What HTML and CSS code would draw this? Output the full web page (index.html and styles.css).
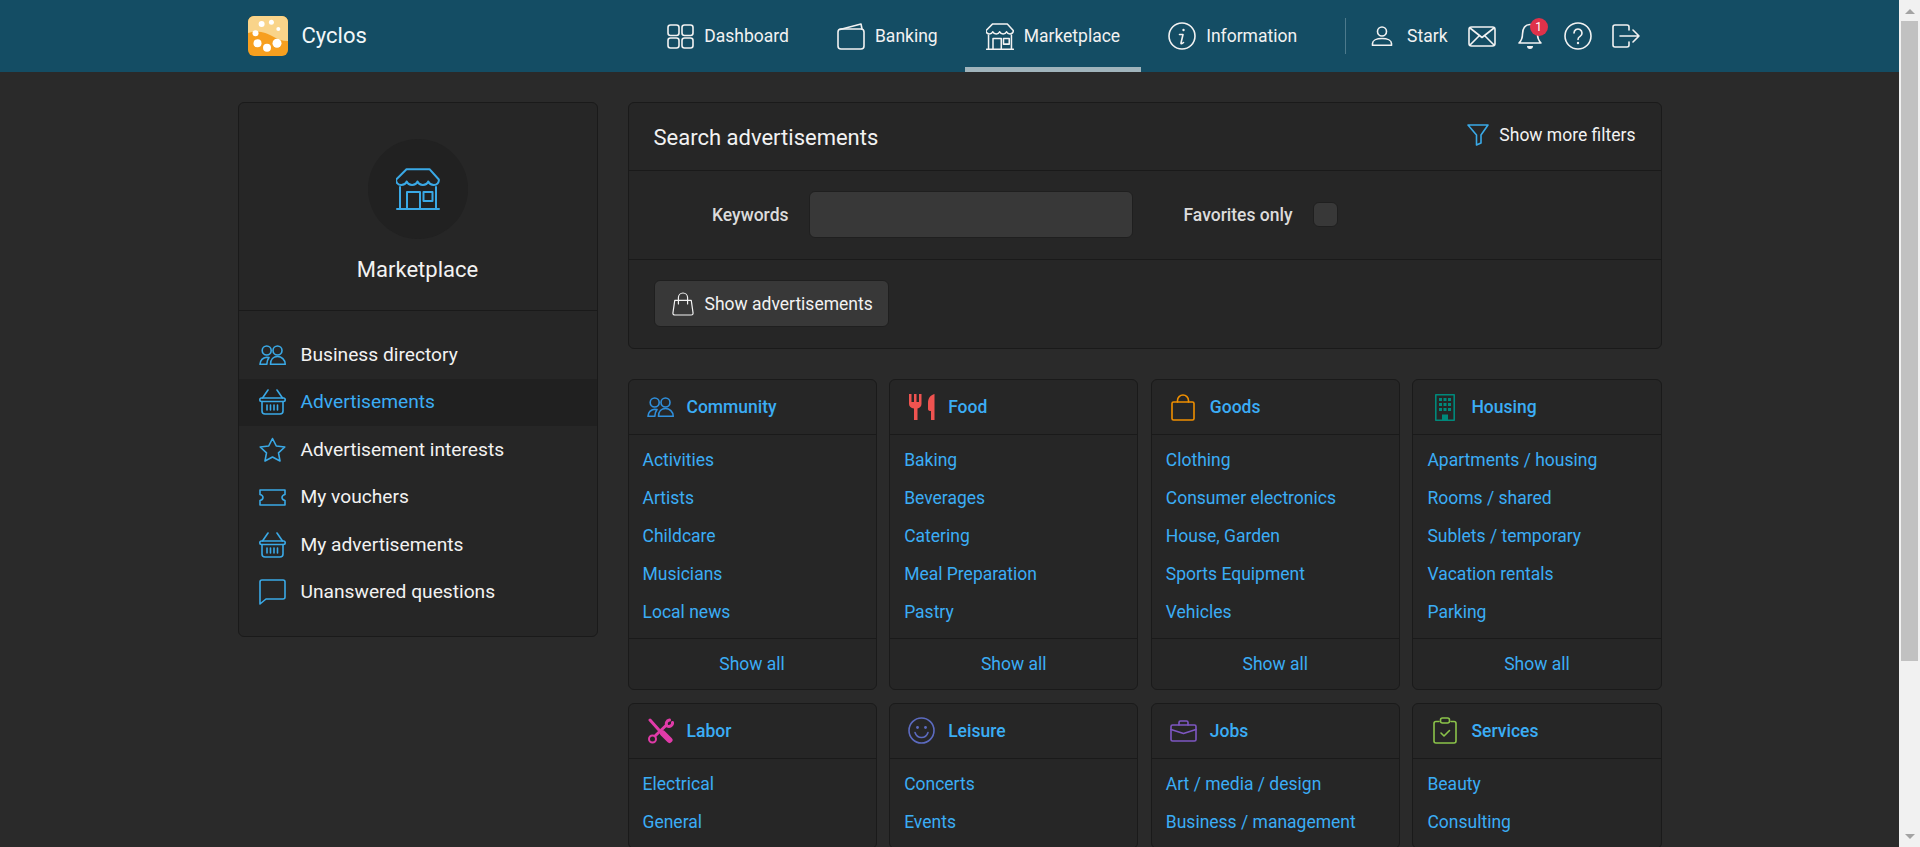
FILE: index.html
```html
<!DOCTYPE html>
<html lang="en">
<head>
  <meta charset="UTF-8" />
  <meta name="viewport" content="width=device-width, initial-scale=1.0"/>
  <title>Cyclos - Marketplace</title>
  <link rel="stylesheet" href="styles.css">
</head>
<body>
  <!-- icon set, used with <use> below -->
  <svg class="icon-defs" xmlns="http://www.w3.org/2000/svg">
    <symbol id="i-dashboard" viewBox="0 0 27 25"><rect x="1" y="1" width="11" height="10.5" rx="2.5"/><rect x="15" y="1" width="11" height="10.5" rx="2.5"/><rect x="1" y="14" width="11" height="10" rx="2.5"/><rect x="15" y="14" width="11" height="10" rx="2.5"/></symbol>
    <symbol id="i-wallet" viewBox="0 0 28 27"><rect x="1" y="6" width="26" height="20" rx="3"/><path d="M3 6.5 24 1l1 5"/></symbol>
    <symbol id="i-store" viewBox="0 0 44 42"><path d="M10.5 1.2h23l9.3 10.3c.4 3-1.7 5.4-5 5.4-2.6 0-4.6-1.3-5.5-3.4-.9 2.1-3 3.4-5.4 3.4s-4.500-1.300-5.400-3.400c-.9 2.100-3 3.400-5.400 3.400s-4.500-1.300-5.400-3.400c-.9 2.100-2.900 3.400-5.500 3.400-3.300 0-5.400-2.400-5-5.400z"/><path d="M4 19v22M40 19v22M1 41h42M11 41V24h13v17"/><rect x="27.500" y="24" width="9" height="9"/></symbol>
    <symbol id="i-info" viewBox="0 0 28 28"><circle cx="14" cy="14" r="13"/><path d="M11.500 12.500h3.500l-2 8.500c-.2 1 .8 1.200 2.500-.5"/><circle class="solid" cx="15.500" cy="8" r="1.200"/></symbol>
    <symbol id="i-user" viewBox="0 0 22 20"><circle cx="11" cy="5.500" r="4.500"/><path d="M1.500 19.300v-1.800c0-3 4-5 9.500-5s9.500 2 9.500 5v1.800z"/></symbol>
    <symbol id="i-mail" viewBox="0 0 28 21"><rect x="1" y="1" width="26" height="19" rx="2.500"/><path d="M2 2l12 9.500L26 2M2 19l9-9M26 19l-9-9"/></symbol>
    <symbol id="i-bell" viewBox="0 0 24 28"><path d="M12 2.500c-5 0-7.500 4-7.500 9.500 0 4.500-1.500 7-3.500 9h22c-2-2-3.500-4.500-3.500-9 0-5.500-2.500-9.500-7.500-9.500z"/><path class="solid" d="M9 24h6a3 3 0 0 1-6 0z"/></symbol>
    <symbol id="i-help" viewBox="0 0 28 28"><circle cx="14" cy="14" r="13"/><path d="M10 11a4 4 0 1 1 6.100 3.400c-1.500.9-2.100 1.600-2.100 3.100"/><circle class="solid" cx="14" cy="21" r="1.200"/></symbol>
    <symbol id="i-logout" viewBox="0 0 28 24"><path d="M17 6V3a2 2 0 0 0-2-2H3a2 2 0 0 0-2 2v18a2 2 0 0 0 2 2h12a2 2 0 0 0 2-2v-3M8 12h19M21 6l6 6-6 6"/></symbol>
    <symbol id="i-people" viewBox="0 0 27 20"><circle cx="7.700" cy="5.500" r="4.500"/><circle cx="18.500" cy="5.500" r="4.500"/><path d="M11.500 19.300c0-4.800 3-7.800 7-7.800s7.700 3 7.700 7.800zM1 19.300c.3-3.500 2.500-6.500 6.700-7 .8 0 1.600.1 2.300.3-1.300 1.700-2 4-2.200 6.700z"/></symbol>
    <symbol id="i-basket" viewBox="0 0 27 26"><path d="M9 1 3.500 9M18 1l5.500 8"/><rect x=".8" y="9" width="25.400" height="3.500" rx="1.700"/><path d="M3 12.500V22a3 3 0 0 0 3 3h15a3 3 0 0 0 3-3v-9.500M8 16v5M11.500 16v5M15 16v5M18.500 16v5"/></symbol>
    <symbol id="i-star" viewBox="0 0 27 25"><path d="M13.500 1.500 17.300 9l8.500 1-6.300 5.800L21 24l-7.500-4L6 24l1.500-8.200L1.200 10l8.500-1z"/></symbol>
    <symbol id="i-ticket" viewBox="0 0 27 17"><path d="M1 1h25v4.500c-2 .5-3 1.600-3 3s1 2.500 3 3V16H1v-4.500c2-.5 3-1.600 3-3s-1-2.500-3-3z"/></symbol>
    <symbol id="i-bubble" viewBox="0 0 27 26"><path d="M3 1h21a2 2 0 0 1 2 2v15a2 2 0 0 1-2 2H7l-6 5V3a2 2 0 0 1 2-2z"/></symbol>
    <symbol id="i-bag" viewBox="0 0 24 26"><path d="M3 9h18l2 14a2 2 0 0 1-2 2H3a2 2 0 0 1-2-2zM7 13V6a5 5 0 0 1 10 0v7"/></symbol>
    <symbol id="i-shopping" viewBox="0 0 24 27"><rect x="1" y="8" width="22" height="18" rx="1.500"/><path d="M6.500 8V6.500a5.500 5.500 0 0 1 11 0V8"/></symbol>
    <symbol id="i-filter" viewBox="0 0 22 22"><path d="M1 1h20l-7 10v8l-4.500 2V11z"/></symbol>
    <symbol id="i-food" viewBox="0 0 26 26"><path class="solid" d="M0 0h2.500v8H5V0h2.500v8H10V0h2.500v10c0 2.500-2 4-4 4.500V26H5V14.500C2 14 0 12.500 0 10zM25.500 0c-4 1-6.500 4-6.500 9v6c0 1.500 1 2 3 2v9h3.500z"/></symbol>
    <symbol id="i-building" viewBox="0 0 20 27"><rect x=".8" y=".8" width="18.400" height="25.400"/><path class="solid" d="M4 4h3v3H4zM8.500 4h3v3h-3zM13 4h3v3h-3zM4 9h3v3H4zM8.500 9h3v3h-3zM13 9h3v3h-3zM4 14h3v3H4zM8.500 14h3v3h-3zM13 14h3v3h-3zM7 20.500h6V26H7z"/></symbol>
    <symbol id="i-tools" viewBox="0 0 27 26"><path class="thick" d="M3 2l8.500 9.500"/><path class="handle" d="M16 15.500l6.500 6.500"/><path class="thick" d="M8.500 17.500 19 7.500"/><path class="thick" d="M25.500 4.500c.5 2.500-2.500 5-5.500 3.500-1.500-2.500-.5-5.500 2.500-6"/><circle class="ring" cx="5.500" cy="21" r="3.500"/></symbol>
    <symbol id="i-smile" viewBox="0 0 27 27"><circle cx="13.500" cy="13.500" r="12.500"/><circle class="solid" cx="9.500" cy="10.500" r="1.400"/><circle class="solid" cx="17.500" cy="10.500" r="1.400"/><path d="M7 15.500c1 3 3.500 5 6.500 5s5.500-2 6.500-5"/></symbol>
    <symbol id="i-briefcase" viewBox="0 0 27 22"><rect x="1" y="5" width="25" height="16" rx="1.500"/><path d="M9 5V2.500A1.500 1.500 0 0 1 10.500 1h6A1.500 1.500 0 0 1 18 2.500V5M1 9.500l12.500 4 12.500-4"/></symbol>
    <symbol id="i-clipboard" viewBox="0 0 24 27"><path d="M6 4.500H3a2 2 0 0 0-2 2V24a2 2 0 0 0 2 2h18a2 2 0 0 0 2-2V6.500a2 2 0 0 0-2-2h-3M8 16l3 3 5.500-5.500"/><rect x="7.500" y="1" width="9" height="5" rx="2"/></symbol>
  </svg>

  <div class="page">
    <header class="topbar">
      <div class="topbar-inner">
        <a class="brand" href="#">
          <svg class="logo" viewBox="0 0 40 40" width="40" height="40">
            <rect width="40" height="40" rx="6" fill="#f79f1f"/>
            <path d="M0 17V6a6 6 0 0 1 6-6h28a6 6 0 0 1 6 6v19c-6 0-11-2-16-5s-14-6-24-3z" fill="#f9d48a"/>
            <g fill="#fff">
              <circle cx="13.600" cy="8" r="3"/><circle cx="23.400" cy="6.300" r="2.500"/><circle cx="30.300" cy="13" r="2"/>
              <circle cx="7.500" cy="17.300" r="3"/><circle cx="9.500" cy="27.300" r="4"/><circle cx="19" cy="31.700" r="4"/><circle cx="29" cy="27.300" r="4.500"/>
            </g>
          </svg>
          <span>Cyclos</span>
        </a>

        <nav class="menu">
          <a href="#"><svg class="ic ic-dashboard"><use href="#i-dashboard"/></svg>Dashboard</a>
          <a href="#"><svg class="ic ic-wallet"><use href="#i-wallet"/></svg>Banking</a>
          <a href="#" class="active"><svg class="ic ic-store"><use href="#i-store"/></svg>Marketplace</a>
          <a href="#"><svg class="ic ic-round"><use href="#i-info"/></svg>Information</a>
        </nav>

        <div class="usermenu">
          <a class="username" href="#"><svg class="ic ic-user"><use href="#i-user"/></svg>Stark</a>
          <a href="#"><svg class="ic ic-mail"><use href="#i-mail"/></svg></a>
          <a class="bell" href="#"><svg class="ic ic-bell"><use href="#i-bell"/></svg><span class="badge">1</span></a>
          <a href="#"><svg class="ic ic-round"><use href="#i-help"/></svg></a>
          <a href="#"><svg class="ic ic-logout"><use href="#i-logout"/></svg></a>
        </div>
      </div>
    </header>

    <div class="container">
      <aside class="card sidebar">
        <div class="side-head">
          <div class="side-circle"><svg class="ic-big"><use href="#i-store"/></svg></div>
          <h2>Marketplace</h2>
        </div>
        <ul class="side-menu">
          <li><a href="#"><span class="side-ic"><svg class="s-people"><use href="#i-people"/></svg></span>Business directory</a></li>
          <li class="active"><a href="#"><span class="side-ic"><svg class="s-basket"><use href="#i-basket"/></svg></span>Advertisements</a></li>
          <li><a href="#"><span class="side-ic"><svg class="s-star"><use href="#i-star"/></svg></span>Advertisement interests</a></li>
          <li><a href="#"><span class="side-ic"><svg class="s-ticket"><use href="#i-ticket"/></svg></span>My vouchers</a></li>
          <li><a href="#"><span class="side-ic"><svg class="s-basket"><use href="#i-basket"/></svg></span>My advertisements</a></li>
          <li><a href="#"><span class="side-ic"><svg class="s-bubble"><use href="#i-bubble"/></svg></span>Unanswered questions</a></li>
        </ul>
      </aside>

      <main class="content">
        <section class="card search">
          <div class="search-head">
            <h1>Search advertisements</h1>
            <a class="filters" href="#"><svg><use href="#i-filter"/></svg>Show more filters</a>
          </div>
          <div class="search-fields">
            <label class="field-keywords" for="keywords">Keywords</label>
            <input type="text" id="keywords" />
            <label class="field-favorites" for="favorites">Favorites only</label>
            <span class="checkbox" id="favorites"></span>
          </div>
          <div class="search-actions">
            <button type="button"><svg><use href="#i-bag"/></svg>Show advertisements</button>
          </div>
        </section>

        <div class="categories">
          <section class="card cat">
            <h3><span class="cat-ic"><svg class="c-people"><use href="#i-people"/></svg></span>Community</h3>
            <ul><li><a href="#">Activities</a></li><li><a href="#">Artists</a></li><li><a href="#">Childcare</a></li><li><a href="#">Musicians</a></li><li><a href="#">Local news</a></li></ul>
            <a class="show-all" href="#">Show all</a>
          </section>
          <section class="card cat">
            <h3><span class="cat-ic"><svg class="c-food"><use href="#i-food"/></svg></span>Food</h3>
            <ul><li><a href="#">Baking</a></li><li><a href="#">Beverages</a></li><li><a href="#">Catering</a></li><li><a href="#">Meal Preparation</a></li><li><a href="#">Pastry</a></li></ul>
            <a class="show-all" href="#">Show all</a>
          </section>
          <section class="card cat">
            <h3><span class="cat-ic"><svg class="c-goods"><use href="#i-shopping"/></svg></span>Goods</h3>
            <ul><li><a href="#">Clothing</a></li><li><a href="#">Consumer electronics</a></li><li><a href="#">House, Garden</a></li><li><a href="#">Sports Equipment</a></li><li><a href="#">Vehicles</a></li></ul>
            <a class="show-all" href="#">Show all</a>
          </section>
          <section class="card cat">
            <h3><span class="cat-ic"><svg class="c-housing"><use href="#i-building"/></svg></span>Housing</h3>
            <ul><li><a href="#">Apartments / housing</a></li><li><a href="#">Rooms / shared</a></li><li><a href="#">Sublets / temporary</a></li><li><a href="#">Vacation rentals</a></li><li><a href="#">Parking</a></li></ul>
            <a class="show-all" href="#">Show all</a>
          </section>
          <section class="card cat">
            <h3><span class="cat-ic"><svg class="c-labor"><use href="#i-tools"/></svg></span>Labor</h3>
            <ul><li><a href="#">Electrical</a></li><li><a href="#">General</a></li></ul>
          </section>
          <section class="card cat">
            <h3><span class="cat-ic"><svg class="c-leisure"><use href="#i-smile"/></svg></span>Leisure</h3>
            <ul><li><a href="#">Concerts</a></li><li><a href="#">Events</a></li></ul>
          </section>
          <section class="card cat">
            <h3><span class="cat-ic"><svg class="c-jobs"><use href="#i-briefcase"/></svg></span>Jobs</h3>
            <ul><li><a href="#">Art / media / design</a></li><li><a href="#">Business / management</a></li></ul>
          </section>
          <section class="card cat">
            <h3><span class="cat-ic"><svg class="c-services"><use href="#i-clipboard"/></svg></span>Services</h3>
            <ul><li><a href="#">Beauty</a></li><li><a href="#">Consulting</a></li></ul>
          </section>
        </div>
      </main>
    </div>
  </div>

  <!-- browser scrollbar as it shows in the screenshot -->
  <div class="scrollbar">
    <span class="arrow-up"></span>
    <span class="thumb"></span>
    <span class="arrow-down"></span>
  </div>
</body>
</html>
```

FILE: styles.css
```css
html {
  overflow: hidden;
}

body {
  margin: 0;
  background: #2a2a2a;
  color: #f2f2f2;
  font-family: Roboto, "Liberation Sans", sans-serif;
  font-size: 17.5px;
  line-height: 24px;
}

a {
  color: inherit;
  text-decoration: none;
}

ul {
  list-style: none;
  margin: 0;
  padding: 0;
}

svg {
  display: block;
  fill: none;
  stroke: currentColor;
  stroke-width: 1.6;
  stroke-linejoin: round;
  stroke-linecap: round;
  overflow: visible;
}

.solid {
  fill: currentColor;
  stroke: none;
}

.thick {
  stroke-width: 3;
}

.handle {
  stroke-width: 6;
}

.ring {
  stroke-width: 2;
}

.icon-defs {
  display: none;
}

.page {
  margin-right: 21px;
}

/* scrollbar */
.scrollbar {
  position: fixed;
  top: 0;
  right: 0;
  bottom: 0;
  width: 21px;
  background: #f1f1f1;
  display: flex;
  flex-direction: column;
  align-items: center;
}

.arrow-up {
  margin: 9px 0 7px;
  border: 5px solid transparent;
  border-top: 0;
  border-bottom-color: #a3a3a3;
  border-left-width: 5px;
  border-right-width: 5px;
}

.thumb {
  width: 17px;
  height: 640px;
  background: #c1c1c1;
}

.arrow-down {
  margin-top: auto;
  margin-bottom: 8px;
  border: 5px solid transparent;
  border-bottom: 0;
  border-top-color: #a3a3a3;
}

/* top bar */
.topbar {
  background: #144d64;
  height: 72px;
}

.topbar-inner {
  width: 1424px;
  height: 72px;
  margin: 0 auto;
  padding: 0 22px 0 10px;
  box-sizing: border-box;
  display: flex;
  align-items: center;
}

.brand {
  display: flex;
  align-items: center;
  gap: 14px;
  font-size: 22px;
  color: #f2f7f9;
}

.logo {
  stroke: none;
}

.menu {
  display: flex;
  gap: 6px;
  height: 72px;
  margin-left: auto;
}

.menu a {
  position: relative;
  display: flex;
  align-items: center;
  gap: 10px;
  padding: 0 21px;
}

.menu a.active::after {
  content: "";
  position: absolute;
  left: 0;
  right: 0;
  bottom: 0;
  height: 5px;
  background: #a0b4bc;
}

.ic-dashboard { width: 27px; height: 25px; }
.ic-wallet { width: 28px; height: 27px; }
.ic-store { width: 28px; height: 27px; stroke-width: 2.4; }
.ic-round { width: 28px; height: 28px; }
.ic-user { width: 22px; height: 20px; }
.ic-mail { width: 28px; height: 21px; }
.ic-bell { width: 24px; height: 28px; }
.ic-logout { width: 28px; height: 24px; }

.usermenu {
  display: flex;
  align-items: center;
  gap: 20px;
  height: 36px;
  margin-left: 27px;
  padding-left: 25px;
  border-left: 1px solid #4d7a8c;
}

.usermenu a {
  display: flex;
  align-items: center;
}

.username {
  gap: 14px;
}

.bell {
  position: relative;
  width: 28px;
  justify-content: center;
}

.badge {
  position: absolute;
  top: -4px;
  left: 14px;
  width: 18px;
  height: 18px;
  border-radius: 50%;
  background: #e0324a;
  color: #fff;
  font-size: 12px;
  line-height: 18px;
  text-align: center;
}

/* page */
.container {
  width: 1424px;
  margin: 0 auto;
  padding: 30px 0 47px;
  display: grid;
  grid-template-columns: 360px 1fr;
  gap: 30px;
  align-items: start;
}

.card {
  background: #262626;
  border: 1px solid #1a1a1a;
  border-radius: 6px;
}

/* sidebar */
.side-head {
  display: flex;
  flex-direction: column;
  align-items: center;
  padding: 36px 0 26px;
  border-bottom: 1px solid #1a1a1a;
}

.side-circle {
  width: 100px;
  height: 100px;
  border-radius: 50%;
  background: #212121;
  display: flex;
  align-items: center;
  justify-content: center;
  color: #3aa9e6;
}

.ic-big {
  width: 44px;
  height: 42px;
  stroke-width: 2;
}

.side-head h2 {
  margin: 17px 0 0;
  font-size: 22px;
  line-height: 28px;
  font-weight: 400;
}

.side-menu {
  padding: 20px 0;
  font-size: 19.2px;
}

.side-menu a {
  display: flex;
  align-items: center;
  gap: 15px;
  height: 47.5px;
  padding-left: 20px;
}

.side-menu li.active {
  background: #202020;
  color: #3badf5;
}

.side-ic {
  width: 27px;
  display: flex;
  justify-content: center;
  color: #3aa9e6;
}

.s-people { width: 27px; height: 20px; }
.s-basket { width: 27px; height: 26px; }
.s-star { width: 27px; height: 25px; }
.s-ticket { width: 27px; height: 17px; }
.s-bubble { width: 27px; height: 26px; }

/* search */
.search-head {
  height: 67px;
  padding: 0 25px;
  display: flex;
  align-items: center;
  justify-content: space-between;
  border-bottom: 1px solid #1a1a1a;
}

.search-head h1 {
  margin: 2px 0 0;
  font-size: 22px;
  font-weight: 400;
}

.filters {
  display: flex;
  align-items: center;
  gap: 10px;
  margin-top: -4px;
}

.filters svg {
  width: 22px;
  height: 22px;
  color: #3aa9e6;
}

.search-fields {
  display: flex;
  align-items: center;
  padding: 20px 25px 21px;
  border-bottom: 1px solid #1a1a1a;
}

.search-fields label {
  font-weight: 500;
  color: #dcdcdc;
}

.field-keywords {
  width: 135px;
  text-align: right;
}

.search-fields input {
  width: 324px;
  height: 47px;
  margin-left: 20px;
  padding: 0 12px;
  box-sizing: border-box;
  background: #383838;
  border: 1px solid #1f1f1f;
  border-radius: 6px;
  color: #f2f2f2;
  font: inherit;
}

.field-favorites {
  margin-left: 51px;
}

.checkbox {
  width: 25px;
  height: 25px;
  margin-left: 20px;
  box-sizing: border-box;
  background: #383838;
  border: 1px solid #1f1f1f;
  border-radius: 6px;
}

.search-actions {
  padding: 20px 25px 21px;
}

.search-actions button {
  display: flex;
  align-items: center;
  gap: 11px;
  height: 47px;
  padding: 0 15px 0 17px;
  background: #383838;
  border: 1px solid #1f1f1f;
  border-radius: 6px;
  color: #f2f2f2;
  font: inherit;
}

.search-actions svg {
  width: 22px;
  height: 24px;
  stroke-width: 1.3;
}

/* category cards */
.categories {
  margin-top: 30px;
  display: grid;
  grid-template-columns: repeat(4, 1fr);
  gap: 12.6px;
}

.cat h3 {
  margin: 0;
  height: 54px;
  padding-left: 18px;
  display: flex;
  align-items: center;
  gap: 13px;
  font-size: 17.5px;
  font-weight: 500;
  color: #3badf5;
  border-bottom: 1px solid #1a1a1a;
}

.cat-ic {
  width: 27px;
  display: flex;
  justify-content: center;
}

.c-people { width: 27px; height: 20px; color: #2f8fdc; }
.c-food { width: 26px; height: 26px; color: #ef5350; }
.c-goods { width: 24px; height: 27px; color: #ef8f00; }
.c-housing { width: 20px; height: 27px; color: #00897b; }
.c-labor { width: 27px; height: 26px; color: #e03ba8; }
.c-leisure { width: 27px; height: 27px; color: #5c6bc0; }
.c-jobs { width: 27px; height: 22px; color: #7e57c2; }
.c-services { width: 24px; height: 27px; color: #8bc34a; }

.cat ul {
  padding: 6px 0 7px 14px;
  color: #3badf5;
}

.cat li {
  height: 38px;
  line-height: 38px;
}

.show-all {
  display: block;
  height: 50px;
  line-height: 50px;
  text-align: center;
  color: #3badf5;
  border-top: 1px solid #1a1a1a;
}
```
